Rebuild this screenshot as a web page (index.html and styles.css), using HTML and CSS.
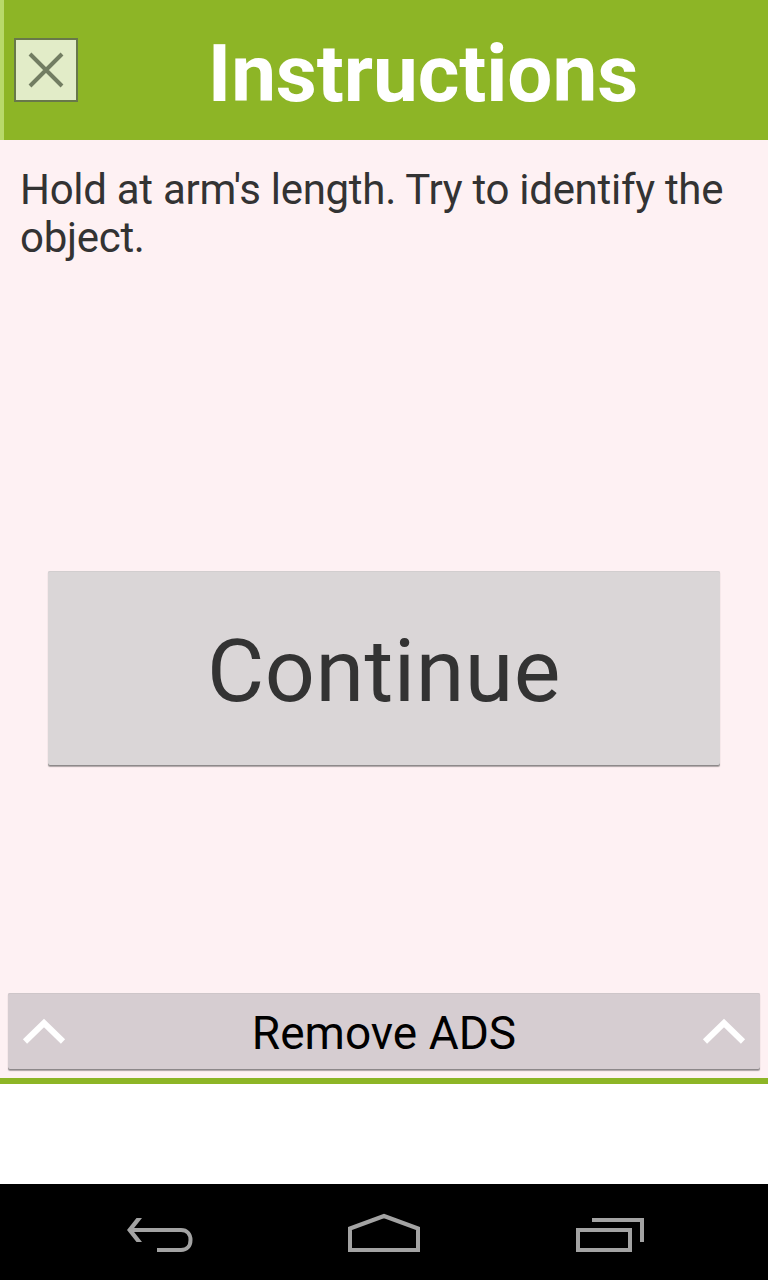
FILE: index.html
```
<!DOCTYPE html>
<html lang="en">
<head>
<meta charset="utf-8">
<title>Instructions</title>
<link rel="stylesheet" href="styles.css">
</head>
<body>
<header class="header">
  <button class="close" aria-label="Close">
    <svg width="60" height="60" viewBox="0 0 60 60"><path d="M14 14L46 46M46 14L14 46"/></svg>
  </button>
  <h1 class="title">Instructions</h1>
</header>
<main class="content">
  <p class="message">Hold at arm's length. Try to identify the object.</p>
  <button class="continue">Continue</button>
  <button class="remove">
    <svg class="chevron" width="44" height="28" viewBox="0 0 44 28"><path d="M3 23.500L22 5L41 23.500"/></svg>
    <span class="remove-label">Remove ADS</span>
    <svg class="chevron" width="44" height="28" viewBox="0 0 44 28"><path d="M3 23.500L22 5L41 23.500"/></svg>
  </button>
</main>
<div class="ad"></div>
<nav class="navbar">
  <svg class="nav-icon" width="100" height="70" viewBox="0 0 100 70"><path d="M20 30H71C77 30 80.500 34 80.500 40C80.500 46 77 50 71 50H47"/><path d="M26.500 18H32L22.500 30L32 42H26.500L17 30Z" class="arrowhead"/></svg>
  <svg class="nav-icon" width="100" height="70" viewBox="0 0 100 70"><path d="M15 50V28.500L49 16L83 28.500V50Z"/></svg>
  <svg class="nav-icon" width="100" height="70" viewBox="0 0 100 70"><path d="M18 30H70V50H18ZM32 20H82V42"/></svg>
</nav>
</body>
</html>
```
FILE: styles.css
```
* { box-sizing: border-box; }
body {
  margin: 0;
  height: 1280px;
  display: flex;
  flex-direction: column;
  background: #fff;
  font-family: Roboto, sans-serif;
  overflow: hidden;
}
button { font-family: inherit; font-weight: 400; border: 0; padding: 0; }
svg { display: block; fill: none; }
.header {
  height: 140px;
  display: flex;
  align-items: center;
  padding-left: 10px;
  border-left: 4px solid #b8d96b;
  background: #8db526;
}
.close {
  width: 64px;
  height: 64px;
  border: 2px solid #68784a;
  background: #e2ecc8;
}
.close svg { stroke: #727d62; stroke-width: 4; }
.title {
  flex: 1;
  margin: 0;
  padding-top: 8px;
  color: #fff;
  font-size: 80px;
  line-height: 94px;
  font-weight: 700;
  letter-spacing: -0.1px;
  text-align: center;
}
.content {
  height: 944px;
  display: flex;
  flex-direction: column;
  background: #fef1f3;
  border-bottom: 6px solid #8db526;
}
.message {
  height: 431px;
  margin: 0;
  padding: 26px 20px 0;
  color: #333;
  font-size: 42px;
  line-height: 48px;
  letter-spacing: -0.29px;
}
.continue {
  height: 195px;
  margin: 0 48px;
  padding-top: 4px;
  border-radius: 2px;
  background: #dad6d7;
  box-shadow: 0 1px 1px #77717299, inset 0 -1px 0 #8d898a, inset 0 1px 0 #d2cecf;
  color: #333;
  font-size: 88px;
  letter-spacing: 0.5px;
}
.remove {
  height: 77px;
  margin: 227px 8px 0;
  padding: 0 14px;
  display: flex;
  align-items: center;
  justify-content: space-between;
  border-radius: 2px;
  background: #d6cdd1;
  box-shadow: 0 1px 1px #77717299, inset 0 -1px 0 #8d888a, inset 0 1px 0 #cec6c9;
  color: #000;
  font-size: 46px;
}
.remove-label { padding-top: 2px; }
.chevron { stroke: #fff; stroke-width: 6; }
.ad { height: 100px; background: #fff; }
.navbar {
  height: 96px;
  padding: 16px 108px 0 110px;
  display: flex;
  justify-content: space-between;
  background: #000;
}
.nav-icon { stroke: #a3a3a3; stroke-width: 4; }
.arrowhead { fill: #a3a3a3; stroke: none; }
```
